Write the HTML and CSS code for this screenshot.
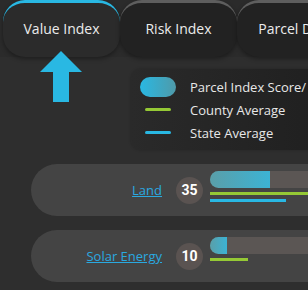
FILE: index.html
```html
<!DOCTYPE html>
<html lang="en">
<head>
    <meta charset="UTF-8">
    <meta name="viewport" content="width=device-width, initial-scale=1.0">
    <title>Parcel Index</title>
    <link rel="stylesheet" href="styles.css">
</head>
<body>
    <div class="tabs">
        <div class="tab active">Value Index</div>
        <div class="tab">Risk Index</div>
        <div class="tab">Parcel Data</div>
    </div>

    <div class="top">
        <svg class="arrow" width="42" height="52" viewBox="0 0 42 52">
            <polygon points="21,0 42,21 29,21 29,51 13,51 13,21 0,21" fill="#29b8e3"/>
        </svg>
        <div class="legend">
            <div class="legend-row"><span class="sw sw-pill"></span>Parcel Index Score/ Ranking</div>
            <div class="legend-row"><span class="sw sw-line green"></span>County Average</div>
            <div class="legend-row"><span class="sw sw-line blue"></span>State Average</div>
        </div>
    </div>

    <div class="rows">
        <div class="row">
            <div class="label"><a href="#">Land</a></div>
            <div class="score">35</div>
            <div class="bars">
                <div class="track"><div class="fill" style="width: 35%"></div></div>
                <div class="avg green" style="width: 80%"></div>
                <div class="avg blue" style="width: 44%"></div>
            </div>
        </div>
        <div class="row">
            <div class="label"><a href="#">Solar Energy</a></div>
            <div class="score">10</div>
            <div class="bars">
                <div class="track"><div class="fill" style="width: 10%"></div></div>
                <div class="avg green" style="width: 22%"></div>
            </div>
        </div>
    </div>
</body>
</html>
```

FILE: styles.css
```css
html, body { margin: 0; height: 100%; overflow: hidden; }
body { background: #2e2e2e; font-family: "Open Sans", sans-serif; color: #e8e8e8; }

.tabs { display: flex; padding-left: 3px; height: 57px; background: #2b2b2b; }
.tab { flex: 0 0 117px; box-sizing: border-box; height: 57px; border-top: 3px solid #5e5e5e; border-radius: 22px; background: #222; color: #ececec; font-size: 14px; display: flex; align-items: center; justify-content: center; padding-bottom: 4px; box-shadow: 0 2px 4px rgba(0,0,0,0.35); white-space: nowrap; }
.tab.active { border-top-color: #29b8e3; background: #2b2b2b; }

.top { display: flex; align-items: flex-start; margin-top: -6px; }
.arrow { display: block; margin-left: 40px; flex: none; }
.legend { margin-left: 49px; margin-top: 18px; width: 260px; height: 81px; box-sizing: border-box; padding: 8px 0 0 9px; border-radius: 10px; background: linear-gradient(to right, #2a2a2a, #1e1e1e); box-shadow: 0 0 3px rgba(0,0,0,0.25); white-space: nowrap; }
.legend-row { display: flex; align-items: center; height: 23px; font-size: 13px; }
.legend-row:first-child { height: 20px; margin-bottom: 1px; }
.sw { flex: none; display: block; margin-right: 14px; }
.sw-pill { width: 36px; height: 20px; border-radius: 10px; background: linear-gradient(to right, #29b8e3, #4f9aa9); }
.sw-line { width: 26px; height: 3px; border-radius: 2px; margin-left: 5px; margin-right: 19px; }
.green { background: #95c935; }
.blue { background: #29b8e3; }

.rows { margin-top: 14px; margin-left: 31px; display: flex; flex-direction: column; gap: 14px; }
.row { width: 420px; height: 52px; border-radius: 26px; background: #444; display: flex; align-items: center; }
.label { width: 131px; text-align: right; font-size: 13px; }
.label a { color: #2aa9e0; }
.score { flex: none; width: 27px; height: 27px; margin-left: 14px; border-radius: 50%; background: #5a5351; color: #fff; font-family: Roboto, sans-serif; font-weight: bold; font-size: 14px; display: flex; align-items: center; justify-content: center; }
.bars { align-self: flex-start; margin-top: 7px; margin-left: 7px; width: 172px; display: flex; flex-direction: column; gap: 4px; }
.track { height: 17px; background: #5b5654; border-radius: 9px; overflow: hidden; }
.fill { height: 100%; background: linear-gradient(to right, #5a9fa9, #3cb3d4); }
.avg { height: 3px; }
```
